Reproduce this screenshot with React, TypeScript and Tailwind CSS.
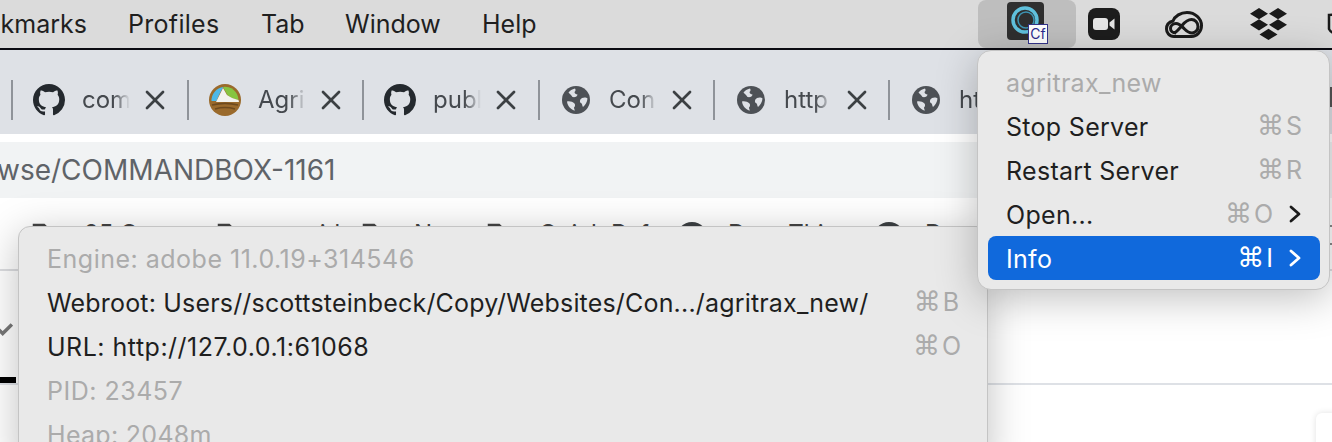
import type { ReactNode } from 'react';
import { X } from 'lucide-react';

const font = 'font-["Inter","Noto_Sans",sans-serif]';

function GithubIcon() {
  return (
    <svg viewBox="0 0 16 16" className="w-8 h-8 shrink-0" fill="#24292e">
      <path d="M8 0C3.58 0 0 3.58 0 8c0 3.54 2.29 6.53 5.47 7.59.4.07.55-.17.55-.38 0-.19-.01-.82-.01-1.49-2.01.37-2.53-.49-2.69-.94-.09-.23-.48-.94-.82-1.13-.28-.15-.68-.52-.01-.53.63-.01 1.08.58 1.23.82.72 1.21 1.87.87 2.33.66.07-.52.28-.87.51-1.07-1.78-.2-3.64-.89-3.64-3.95 0-.87.31-1.59.82-2.15-.08-.2-.36-1.02.08-2.12 0 0 .67-.21 2.2.82.64-.18 1.32-.27 2-.27s1.36.09 2 .27c1.53-1.04 2.2-.82 2.2-.82.44 1.1.16 1.92.08 2.12.51.56.82 1.27.82 2.15 0 3.07-1.87 3.75-3.65 3.95.29.25.54.73.54 1.48 0 1.07-.01 1.93-.01 2.2 0 .21.15.46.55.38A8.01 8.01 0 0 0 16 8c0-4.42-3.58-8-8-8z" />
    </svg>
  );
}

function GlobeIcon() {
  return (
    <svg viewBox="0 0 28 28" className="w-7 h-7 shrink-0 mx-[2px]">
      <circle cx="14" cy="14" r="14" fill="#4d5156" />
      <path d="M13 2.500c-3 .8-5 2-6.500 4 1 1.500 3 2.500 4 4.500 2.500.5 5-.5 5-2.500-1.500-.5-3-.8-3-2.500 1-1 1.500-2 .5-3.500z" fill="#dee1e6" />
      <path d="M20 12c2.500-1 4.500-.5 5.500.5-.3 3.500-2 6.500-4.500 8.500-1-1.500-.5-3-2-4-1.500-.5-1.500-3.500 1-5z" fill="#dee1e6" />
      <path d="M5 15.500c2.500-.5 5.500 0 7.500 2 1 1.500.5 3-.5 4 0 1 .3 2 1 3-4-.5-7.500-4.500-8-9z" fill="#dee1e6" />
    </svg>
  );
}

function AgriIcon() {
  return (
    <svg viewBox="0 0 32 32" className="w-8 h-8 shrink-0">
      <circle cx="16" cy="16" r="16" fill="#9a6a2c" />
      <path d="M2.500 17a13.500 13.500 0 0 1 12-14c-3 4-5 9-7 14z" fill="#4db8e8" />
      <path d="M14 3a13.500 13.500 0 0 1 15.500 13c-5-1-9-3-11-5z" fill="#86c440" />
      <path d="M7 18l7-14 4 7c3 2 7 4 11.500 5l.5 2z" fill="#f2f2ee" />
      <path d="M3 21c8-2 18-2 26 0M6 25c7-2 13-2 20 0" stroke="#6e4a1e" strokeWidth="1.500" fill="none" />
    </svg>
  );
}

function Tab({ icon, label, width, last }: { icon: ReactNode; label: string; width: string; last?: boolean }) {
  return (
    <div className={`flex items-center h-10 pl-5 ${width} shrink-0 ${last ? '' : 'border-r-2 border-[#8f9399]'}`}>
      {icon}
      <span className="ml-[17px] w-[48px] overflow-hidden whitespace-nowrap text-[24px] leading-8 text-[#45494e] shrink-0 [mask-image:linear-gradient(to_right,black_65%,transparent)]">
        {label}
      </span>
      {!last && <X className="w-8 h-8 ml-[9px] shrink-0 text-[#3c4043]" strokeWidth={2} />}
    </div>
  );
}

function Cmd({ k, muted = true, className = '' }: { k: string; muted?: boolean; className?: string }) {
  return (
    <span className={`flex items-center gap-[2px] text-[25px] leading-8 ${muted ? 'text-[#ababab]' : 'text-white'} ${className}`}>
      <span className='font-["DejaVu_Sans"] text-[27px]'>⌘</span>
      <span>{k}</span>
    </span>
  );
}

function Chevron({ color }: { color: string }) {
  return (
    <svg viewBox="0 0 14 18" className="w-[14px] h-[18px]" fill="none" stroke={color} strokeWidth="2.800" strokeLinecap="round" strokeLinejoin="round">
      <path d="M3 2l8 7-8 7" />
    </svg>
  );
}

function FolderIcon() {
  return (
    <svg viewBox="0 0 32 24" className="w-8 h-6 shrink-0" fill="none" stroke="#444" strokeWidth="2.500">
      <path d="M2 22V3h10l3 3h15v16z" />
    </svg>
  );
}

function Bookmark({ label, width, round }: { label: string; width: string; round?: boolean }) {
  return (
    <div className={`flex items-start gap-5 shrink-0 ${width}`}>
      {round ? <div className="w-8 h-8 rounded-full bg-[#3c4043] shrink-0" /> : <FolderIcon />}
      <span className="text-[24px] leading-none text-[#444] whitespace-nowrap">{label}</span>
    </div>
  );
}

function TrayIcons() {
  return (
    <div className="absolute left-[978px] top-0 h-12 w-[354px] flex items-center">
      <div className="relative w-[98px] h-12 bg-[#bebebe] rounded-lg shrink-0">
        <div className="absolute left-[29px] top-[2px] w-[37px] h-[38px] rounded-[4px] bg-[#2f2f2f] flex items-center justify-center">
          <svg viewBox="0 0 32 32" className="w-8 h-8" fill="none">
            <circle cx="15" cy="15" r="12" stroke="#5fc0dc" strokeWidth="3.500" />
            <path d="M9 15a7 7 0 0 1 12-5" stroke="#2f2f2f" strokeWidth="2" />
            <circle cx="16" cy="15" r="8" stroke="#3d94b3" strokeWidth="1.500" />
          </svg>
        </div>
        <div className="absolute left-[50px] top-[24px] w-5 h-5 bg-white border border-[#33338a] flex items-center justify-center text-[14px] leading-none font-normal text-[#2b2b8f]">
          Cf
        </div>
      </div>
      <svg viewBox="0 0 32 32" className="w-8 h-8 ml-[12px] shrink-0">
        <rect width="32" height="32" rx="8" fill="#1d1d1d" />
        <rect x="5" y="10" width="15" height="12" rx="3" fill="#e6e6e6" />
        <path d="M21.500 14.500l5-4v11l-5-4z" fill="#e6e6e6" />
      </svg>
      <svg viewBox="0 0 38 27" className="w-[38px] h-[27px] ml-[45px] shrink-0" fill="none" stroke="#1a1a1a" strokeWidth="3">
        <path d="M9 25.500C4 25.500 1.500 21.500 1.500 18c0-4 2.500-7 6.500-8C10 5 15.500 1.500 22 1.500c8 0 14.500 6 14.500 13 0 6-4.500 11-10 11z" />
        <path d="M11 22C7.500 22 5.500 20 5.500 17.500c0-3 2.500-5 5.500-5 3.500 0 6 3 8.500 5.500 2 2 4 4 7.500 4 3.500 0 6-3 6-6.500 0-4-3-7-6.500-7-4 0-7 3-9.500 6-2.500 3-4.500 5.500-7.500 7.500" />
      </svg>
      <svg viewBox="0 0 37 32" className="w-[37px] h-8 ml-[47px] shrink-0" fill="#1a1a1a">
        <path d="M9 0L0 5.700 9 11.300 18 5.700zM28 0L19 5.700l9 5.600 9-5.600zM0 16.800L9 22.500l9-5.700-9-5.500zM28 11.300l-9 5.500 9 5.700 9-5.700zM18.500 20.800L9.500 26.400 18.500 32l9-5.600z" />
      </svg>
      <svg viewBox="0 0 20 24" className="w-5 h-6 ml-[40px] shrink-0" fill="none" stroke="#1a1a1a" strokeWidth="2.500">
        <path d="M2 3c4 0 8-.8 12-2.500V16c-3 5-9 7-12 1z" />
      </svg>
    </div>
  );
}

function Row({ left, right, arrow, state, tracking = 'tracking-[0.3px]', cmdClass }: { left: string; right?: string; arrow?: boolean; state?: 'muted' | 'active'; tracking?: string; cmdClass?: string }) {
  return (
    <div
      className={`flex items-center h-11 px-[18px] rounded-lg ${
        state === 'active' ? 'bg-[#1069dc] text-white' : state === 'muted' ? 'text-[#ababab]' : 'text-[#1f1f1f]'
      }`}
    >
      <span className={`flex-1 whitespace-nowrap text-[25px] leading-8 pt-[2px] ${tracking}`}>{left}</span>
      {right && <Cmd k={right} muted={state !== 'active'} className={cmdClass} />}
      {arrow && (
        <span className="ml-[15px]">
          <Chevron color={state === 'active' ? '#ffffff' : '#1a1a1a'} />
        </span>
      )}
    </div>
  );
}

export default function App() {
  return (
    <div className={`relative w-[1332px] h-[442px] overflow-hidden bg-white ${font}`}>
      {/* menu bar */}
      <div className="flex items-center h-12 pt-[1px] bg-[#dbdbdb] text-[25px] text-[#1f1f1f]">
        <span className="w-[128px] overflow-hidden whitespace-nowrap flex justify-end">
          <span className="pr-[41px]">kmarks</span>
        </span>
        <span className="w-[133px] tracking-[0.3px]">Profiles</span>
        <span className="w-[84px]">Tab</span>
        <span className="w-[137px]">Window</span>
        <span>Help</span>
      </div>
      <div className="h-[2px] bg-[#0b0b12]" />

      {/* tab strip */}
      <div className="h-[84px] bg-[#dee1e6] flex items-center pt-[16px] overflow-hidden">
        <div className="w-[13px] h-10 border-r-2 border-[#8f9399] shrink-0" />
        <Tab icon={<GithubIcon />} label="com" width="w-[176px]" />
        <Tab icon={<AgriIcon />} label="Agri" width="w-[175px]" />
        <Tab icon={<GithubIcon />} label="publ" width="w-[176px]" />
        <Tab icon={<GlobeIcon />} label="Con" width="w-[175px]" />
        <Tab icon={<GlobeIcon />} label="http" width="w-[175px]" />
        <Tab icon={<GlobeIcon />} label="http" width="w-[175px]" last />
      </div>

      {/* address bar */}
      <div className="pt-2 bg-white">
        <div className="h-14 bg-[#f1f3f4] flex items-center text-[28px] text-[#5f6368] whitespace-nowrap">
          <span className="-ml-[3px]">wse/COMMANDBOX-1161</span>
        </div>
      </div>

      {/* bookmarks bar */}
      <div className="h-[73px] flex items-start pt-6 pl-8 border-b-2 border-[#dcdde0] overflow-hidden">
        <Bookmark label="25 Copy" width="w-[185px]" />
        <Bookmark label="provide" width="w-[145px]" />
        <Bookmark label="Nav" width="w-[125px]" />
        <Bookmark label="Quick Ref" width="w-[189px]" />
        <Bookmark label="Dare This" width="w-[197px]" round />
        <Bookmark label="Dare" width="w-[100px]" round />
      </div>

      {/* page content under the menus */}
      <div className="relative h-[114px] border-b-2 border-[#dee1e6] flex flex-col justify-between pt-[51px]">
        <svg viewBox="0 0 14 12" className="w-4 h-[14px] -ml-[3px]" fill="none" stroke="#777" strokeWidth="3">
          <path d="M1 6l4 4 8-8" />
        </svg>
        <div className="w-4 h-[6px] bg-black" />
      </div>

      <TrayIcons />

      {/* bits of the browser showing past the tray menu */}
      <div className="absolute right-0 top-[87px] w-[2px] h-5 bg-[#555]" />
      <div className="absolute right-0 top-[225px] w-[2px] h-5 border-y-2 border-[#888]" />
      <div className="absolute left-[1316px] top-[413px] w-5 h-10 rounded-tl-md bg-white shadow-[0_0_6px_rgba(0,0,0,0.12)]" />

      {/* info submenu */}
      <div className="absolute left-[18px] top-[226px] w-[970px] h-[240px] rounded-t-[12px] bg-[#e9e9e9] border border-[#c4c4c4] pt-[9px] px-[10px] shadow-[0_8px_40px_rgba(0,0,0,0.25)]">
        <Row left="Engine: adobe 11.0.19+314546" state="muted" tracking="tracking-[0.5px]" />
        <Row left="Webroot: Users//scottsteinbeck/Copy/Websites/Con.../agritrax_new/" right="B" tracking="tracking-[0.18px]" />
        <Row left="URL: http://127.0.0.1:61068" right="O" tracking="tracking-[0.5px]" cmdClass="-mr-[2px]" />
        <Row left="PID: 23457" state="muted" tracking="tracking-[0.5px]" />
        <Row left="Heap: 2048m" state="muted" />
      </div>

      {/* tray menu */}
      <div className="absolute left-[977px] top-[50px] w-[353px] h-[240px] rounded-[14px] bg-[#e9e9e9] border border-[#c4c4c4] pt-[9px] pl-[10px] pr-[9px] shadow-[0_8px_40px_rgba(0,0,0,0.25)]">
        <Row left="agritrax_new" state="muted" />
        <Row left="Stop Server" right="S" />
        <Row left="Restart Server" right="R" />
        <Row left="Open..." right="O" arrow />
        <Row left="Info" right="I" arrow state="active" />
      </div>
    </div>
  );
}
